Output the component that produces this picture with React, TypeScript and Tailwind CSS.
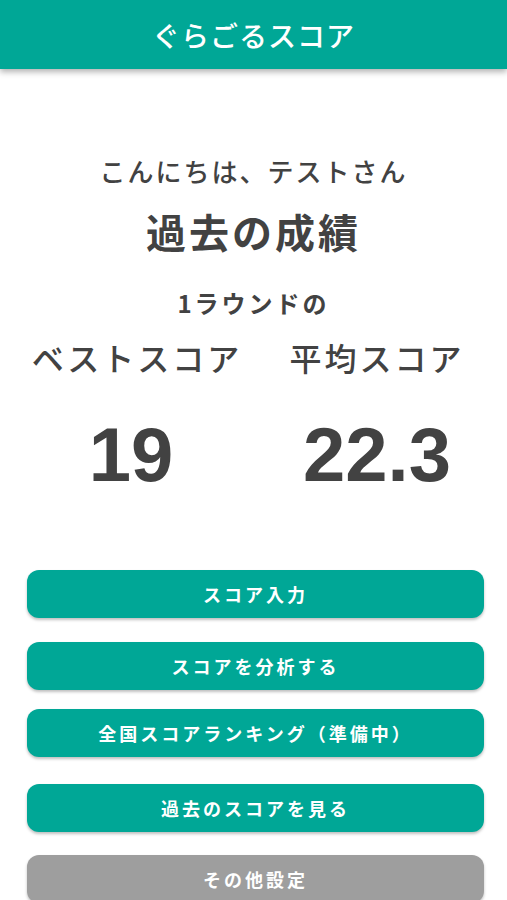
import React from 'react';

const jp = '[font-family:"Noto_Sans_CJK_JP","Noto_Sans",sans-serif]';

const buttons = [
  { label: 'スコア入力', mt: 'mt-[75px]', tone: 'bg-[#00a796]' },
  { label: 'スコアを分析する', mt: 'mt-[24px]', tone: 'bg-[#00a796]' },
  { label: '全国スコアランキング（準備中）', mt: 'mt-[19px]', tone: 'bg-[#00a796]' },
  { label: '過去のスコアを見る', mt: 'mt-[27px]', tone: 'bg-[#00a796]' },
  { label: 'その他設定', mt: 'mt-[23px]', tone: 'bg-[#9e9e9e]' },
];

export default function App() {
  return (
    <div className={`min-h-[900px] w-full overflow-hidden bg-white text-[#424242] ${jp}`}>
      <header className="flex h-[69px] items-center justify-center bg-[#00a796] shadow-[0_3px_6px_rgba(0,0,0,0.3)]">
        <h1 className="text-[28px] font-medium tracking-[1px] text-white">ぐらごるスコア</h1>
      </header>

      <main className="flex flex-col">
        <p className="mt-[84px] text-center text-[26px] font-medium leading-[36px] tracking-[2px]">
          こんにちは、テストさん
        </p>
        <h2 className="mt-[17px] text-center text-[40px] font-bold leading-[50px] tracking-[3px]">過去の成績</h2>
        <p className="mt-[31px] text-center text-[24px] font-bold leading-[32px] tracking-[3px]">1ラウンドの</p>

        <div className="mt-[18px] flex pl-[17px]">
          <div className="flex w-[240px] flex-col items-center">
            <span className="text-[32px] font-medium leading-[40px] tracking-[3px]">ベストスコア</span>
            <span className='mt-[38px] pr-[12px] text-[76px] font-bold leading-[80px] [font-family:"Liberation_Sans",Arial,sans-serif]'>
              19
            </span>
          </div>
          <div className="flex w-[240px] flex-col items-center">
            <span className="text-[32px] font-medium leading-[40px] tracking-[3px]">平均スコア</span>
            <span className='mt-[38px] text-[76px] font-bold leading-[80px] [font-family:"Liberation_Sans",Arial,sans-serif]'>
              22.3
            </span>
          </div>
        </div>

        <div className="flex flex-col pl-[27px] pr-[23px]">
          {buttons.map((b) => (
            <button
              key={b.label}
              className={`${b.mt} ${b.tone} flex h-[48px] w-full items-center justify-center rounded-[12px] text-[18px] font-bold tracking-[3px] text-white shadow-[0_2px_3px_rgba(0,0,0,0.25)]`}
            >
              {b.label}
            </button>
          ))}
        </div>
      </main>
    </div>
  );
}
